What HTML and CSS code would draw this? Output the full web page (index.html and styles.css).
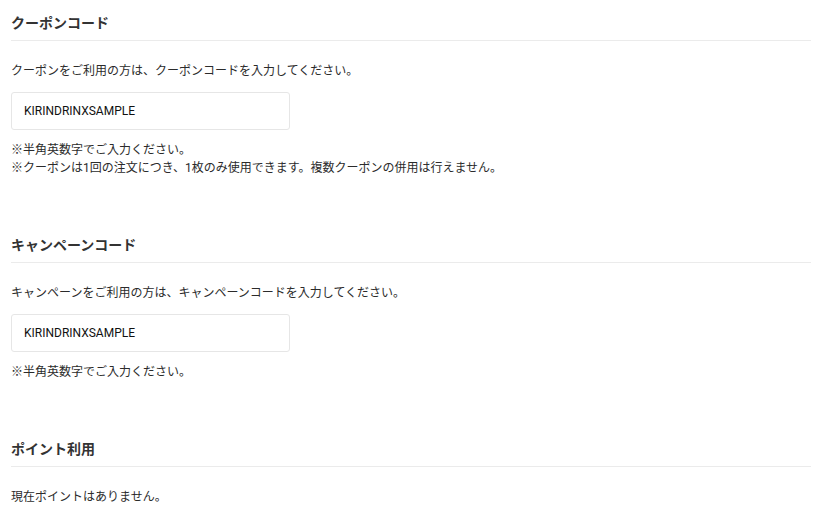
FILE: index.html
```html
<!DOCTYPE html>
<html lang="ja">
<head>
<meta charset="utf-8">
<link rel="stylesheet" href="styles.css">
</head>
<body>
<main class="page">
  <section class="block">
    <h2 class="block-title">クーポンコード</h2>
    <p class="lead">クーポンをご利用の方は、クーポンコードを入力してください。</p>
    <input class="code-input" type="text" value="KIRINDRINXSAMPLE">
    <div class="notes">
      <p>※半角英数字でご入力ください。</p>
      <p>※クーポンは1回の注文につき、1枚のみ使用できます。複数クーポンの併用は行えません。</p>
    </div>
  </section>
  <section class="block">
    <h2 class="block-title">キャンペーンコード</h2>
    <p class="lead">キャンペーンをご利用の方は、キャンペーンコードを入力してください。</p>
    <input class="code-input" type="text" value="KIRINDRINXSAMPLE">
    <div class="notes">
      <p>※半角英数字でご入力ください。</p>
    </div>
  </section>
  <section class="block">
    <h2 class="block-title">ポイント利用</h2>
    <p class="lead">現在ポイントはありません。</p>
  </section>
</main>
</body>
</html>
```
FILE: styles.css
```css
* { box-sizing: border-box; }
html, body { margin: 0; padding: 0; background: #fff; }
body {
  font-family: Roboto, "Noto Sans CJK JP", sans-serif;
  color: #2b2b2b;
  font-size: 12px;
}
.page {
  width: 800px;
  margin-left: 11px;
  padding-top: 13px;
  display: flex;
  flex-direction: column;
  gap: 58px;
}
.block { display: flex; flex-direction: column; align-items: flex-start; }
.block-title {
  align-self: stretch;
  margin: 0;
  font-size: 14px;
  font-weight: 700;
  line-height: 20px;
  padding-bottom: 7px;
  border-bottom: 1px solid #ebebeb;
  color: #333;
}
.lead {
  margin: 21px 0 0;
  line-height: 18px;
}
.code-input {
  margin-top: 12px;
  width: 279px;
  height: 38px;
  border: 1px solid #e6e6e6;
  border-radius: 3px;
  padding: 0 12px;
  font-family: Roboto, "Noto Sans CJK JP", sans-serif;
  font-size: 12px;
  color: #111;
  background: #fff;
  outline: none;
}
.notes { margin-top: 11px; }
.notes p { margin: 0; line-height: 18px; }
```
